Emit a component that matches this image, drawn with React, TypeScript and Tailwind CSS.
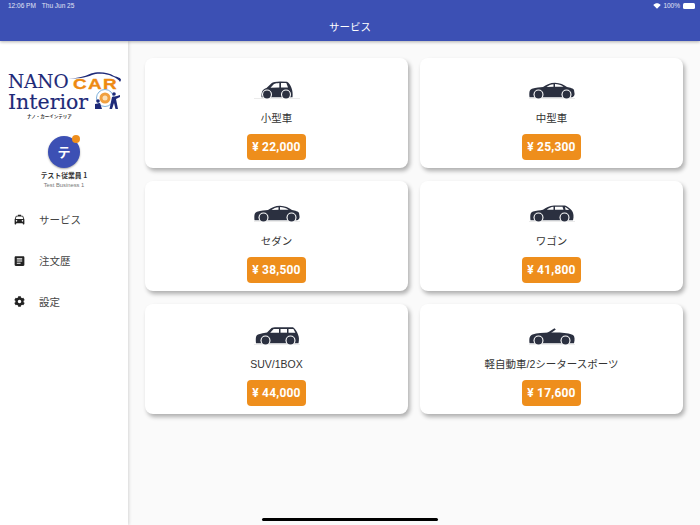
import { FaCog } from "react-icons/fa"
import { MdArticle, MdLocalTaxi } from "react-icons/md"

type CarKind = "small" | "sedan" | "crossover" | "suv" | "convertible"

const jp = "font-['Noto_Sans_CJK_JP','Noto_Sans',sans-serif]"

const carShapes: Record<CarKind, { body: string; windows: string[]; wheels: [number, number]; extra?: string }> = {
  small: {
    body: "M8.5 17.2 C8.3 12 9.5 9 13.5 8 L18.5 3.2 C19.5 2.2 23 1.7 27 1.6 L34 1.7 C36 2.5 37.5 5.5 38.5 8 C39.6 11 39.9 14 39.5 17.2 Z",
    windows: ["M17.5 7.7 L21 4 C22 3.4 24 3 26.3 2.9 L26.3 7.6 Z", "M28 2.9 L33.3 2.9 L35 7.4 L28 7.5 Z"],
    wheels: [14, 33],
  },
  sedan: {
    body: "M1.5 17.2 C1 12 1.5 9.5 4 8.7 C8 7.6 12 7.4 15 7 C19 4.6 22 2.8 27 2.8 C32 2.8 36 5 39 7 C42 7.6 45.8 8.6 46 10 L46.6 14 C46.6 15.5 45 17.2 44 17.2 Z",
    windows: ["M18.5 6.9 C20.5 5.3 23 4.4 25.5 4.2 L25.5 6.8 Z", "M27 4.1 C30 4.1 33 5.2 35.5 6.8 L27 6.8 Z"],
    wheels: [10.5, 38.5],
  },
  crossover: {
    body: "M2.5 17.2 C2 12 2.3 9.6 5 8.6 C8 7.8 12 7.4 15 6.8 C18 4.6 21 2.8 26 2.4 L37 2.4 C39 2.8 42 5.3 44 7.8 C45.6 10 46 13.5 45 17.2 Z",
    windows: ["M18.8 6.7 C21 5 23 4 25.5 3.8 L25.5 6.7 Z", "M27 3.8 L34.5 3.8 L35.5 6.7 L27 6.7 Z", "M37 4 C38.5 4.6 40 5.8 41 6.9 L37.5 6.8 Z"],
    wheels: [10.5, 36.5],
  },
  suv: {
    body: "M3 17.2 C2.5 12 2.8 9.4 5 8.4 C8 7.4 11 7 14 6.6 L18.5 2 C19 1.6 21 1.3 24 1.3 L40 1.3 C42 2.3 44 5.8 45 8.6 C46.2 11 46.2 14 45.5 17.2 Z",
    windows: ["M17.2 6.7 L20.6 3 L26 3 L26 6.7 Z", "M27.5 3 L34 3 L34 6.7 L27.5 6.7 Z", "M35.5 3 L40.4 3 L42.4 6.7 L35.5 6.7 Z"],
    wheels: [12.5, 37.5],
  },
  convertible: {
    body: "M1.5 17.2 C1 12 1.5 9.6 4.5 8.4 C9 7.2 15 6.8 21 6.6 L28 6.6 C34 6.4 42 7.4 45 9 C46.8 10.2 47 13.5 46 17.2 Z",
    windows: [],
    wheels: [10.5, 37.5],
    extra: "M19 7 L26.5 2.2 L27.8 3.4 L23 7 Z",
  },
}

function CarIcon({ kind }: { kind: CarKind }) {
  const car = carShapes[kind]
  return (
    <svg viewBox="0 0 48 20" className="w-12 h-5" aria-hidden="true">
      <rect x={1} y={18.4} width={46} height={0.6} fill="#dedede" />
      <path d={car.body} fill="#2b3040" />
      {car.extra && <path d={car.extra} fill="#2b3040" />}
      {car.windows.map((d) => (
        <path key={d} d={d} fill="#fff" />
      ))}
      {car.wheels.map((x) => (
        <g key={x}>
          <circle cx={x} cy={14.5} r={5} fill="#fff" />
          <circle cx={x} cy={14.5} r={3.9} fill="#2b3040" />
        </g>
      ))}
    </svg>
  )
}

const services: { name: string; price: string; car: CarKind }[] = [
  { name: "小型車", price: "¥ 22,000", car: "small" },
  { name: "中型車", price: "¥ 25,300", car: "sedan" },
  { name: "セダン", price: "¥ 38,500", car: "sedan" },
  { name: "ワゴン", price: "¥ 41,800", car: "crossover" },
  { name: "SUV/1BOX", price: "¥ 44,000", car: "suv" },
  { name: "軽自動車/2シータースポーツ", price: "¥ 17,600", car: "convertible" },
]

function Logo() {
  return (
    <div className="relative self-start ml-2 w-[114px] h-[40px] text-[#1e2a78] font-['DejaVu_Serif',serif] [-webkit-text-stroke:0.15px_#1e2a78]">
      <div className="text-[18.5px] leading-[20px] tracking-[-0.1px]">NANO</div>
      <div className="text-[20.5px] leading-[20px]">Interior</div>
      <div className="absolute left-[65px] top-[5px] origin-left scale-x-[1.35] text-[#ee8a12] text-[14px] leading-[14px] font-bold tracking-[1px] font-['Liberation_Sans',sans-serif] [-webkit-text-stroke:0.3px_#ee8a12]">
        CAR
      </div>
      <svg viewBox="0 0 114 46" className="absolute left-0 top-0 w-[114px] h-[46px]" aria-hidden="true">
        <path
          d="M60 7 C68 6 76 5 83 1.5 C90 -0.5 100 0 106 4 C110 5 113 6 113 8 L112 10 C110 6 104 4.5 101 3 C94 1 88 1.5 84 3 C78 6 68 6.5 60 7 Z"
          fill="#1e2a78"
        />
        <circle cx="97" cy="26" r="8.5" fill="none" stroke="#7fb2dc" strokeWidth="1" />
        <circle cx="97" cy="26" r="5.5" fill="#f0a040" />
        <circle cx="97" cy="26" r="2.5" fill="#fbe0b8" />
        <circle cx="90" cy="29" r="1.8" fill="#1e2a78" />
        <path d="M87 32 L92 31 L94 37 L87 37 Z" fill="#1e2a78" />
        <circle cx="106" cy="22" r="1.8" fill="#1e2a78" />
        <path d="M104 25 L109 24 L112 23 L112 25 L108 27 L110 37 L107.5 37 L106 31 L104 37 L101.5 37 Z" fill="#1e2a78" />
      </svg>
    </div>
  )
}

function StatusBar() {
  return (
    <div className="h-3 flex items-center justify-between pl-2 pr-[5px] text-white/85 text-[6.5px] font-['Liberation_Sans',sans-serif]">
      <div className="flex gap-[6px]">
        <span>12:06 PM</span>
        <span>Thu Jun 25</span>
      </div>
      <div className="flex items-center gap-[2px]">
        <svg viewBox="0 0 10 8" className="w-[8px] h-[6px]" aria-hidden="true">
          <path d="M5 7.5 L0 2.5 C3 -0.5 7 -0.5 10 2.5 Z" fill="#fff" />
        </svg>
        <span>100%</span>
        <div className="ml-px w-[12px] h-[6px] rounded-[1.5px] bg-white" />
      </div>
    </div>
  )
}

function NavItem({ icon, label }: { icon: React.ReactNode; label: string }) {
  return (
    <div className="h-[41px] flex items-center pl-[13px] text-[#444]">
      <span className="w-[13px] flex justify-center text-[#222]">{icon}</span>
      <span className={`ml-[13px] text-[10.5px] ${jp}`}>{label}</span>
    </div>
  )
}

export default function App() {
  return (
    <div className="relative w-[700px] h-[525px] overflow-hidden bg-[#fafafa] flex flex-col">
      <header className="h-[41px] bg-[#3c50b4] shadow-[0_1px_3px_rgba(0,0,0,0.3)] z-20 shrink-0">
        <StatusBar />
        <div className={`text-center text-white text-[10.5px] leading-[29px] ${jp}`}>サービス</div>
      </header>

      <div className="flex flex-1">
        <aside className="w-[128px] bg-white shadow-[1px_0_3px_rgba(0,0,0,0.15)] z-10 flex flex-col items-center pt-[31px]">
          <Logo />
          <div className={`self-start ml-[27px] mt-[1px] text-[4.5px] leading-[6px] font-bold text-[#333] ${jp}`}>ナノ・カーインテリア</div>

          <div className="relative mt-[17px] w-8 h-8 rounded-full bg-[#3c50b4] shadow-[0_1px_2px_rgba(0,0,0,0.35)] flex items-center justify-center">
            <span className={`text-white text-[13px] font-bold ${jp}`}>テ</span>
            <span className="absolute -top-[1px] right-0 w-2 h-2 rounded-full bg-[#ee8e1c]" />
          </div>
          <div className={`mt-[1px] text-[6.8px] leading-[12px] font-bold text-[#333] ${jp}`}>テスト従業員 1</div>
          <div className="text-[5.8px] leading-[9px] text-[#777] font-['Liberation_Sans',sans-serif]">Test Business 1</div>

          <nav className="w-full mt-[9px]">
            <NavItem icon={<MdLocalTaxi size={15} />} label="サービス" />
            <NavItem icon={<MdArticle size={14} />} label="注文歴" />
            <NavItem icon={<FaCog size={11} />} label="設定" />
          </nav>
        </aside>

        <main className="flex-1 pt-[17px] pl-[17px] pr-[17px]">
          <div className="grid grid-cols-2 gap-x-3 gap-y-[13px]">
            {services.map((s) => (
              <div
                key={s.name}
                className="h-[110px] bg-white rounded-lg shadow-[2px_3px_4px_rgba(0,0,0,0.3)] flex flex-col items-center pt-[22px]"
              >
                <CarIcon kind={s.car} />
                <div className="mt-[10px] text-[10.5px] leading-[16px] text-[#333] font-['Liberation_Sans','Noto_Sans_CJK_JP',sans-serif]">{s.name}</div>
                <div className="mt-2 w-[59px] h-[26px] rounded bg-[#ee8e1c] flex items-center justify-center text-white text-[12px] tracking-[0.2px] font-bold font-['Roboto',sans-serif]">
                  {s.price}
                </div>
              </div>
            ))}
          </div>
        </main>
      </div>

      <div className="absolute left-[262px] bottom-[4px] w-[176px] h-[3px] rounded-full bg-black z-30" />
    </div>
  )
}
